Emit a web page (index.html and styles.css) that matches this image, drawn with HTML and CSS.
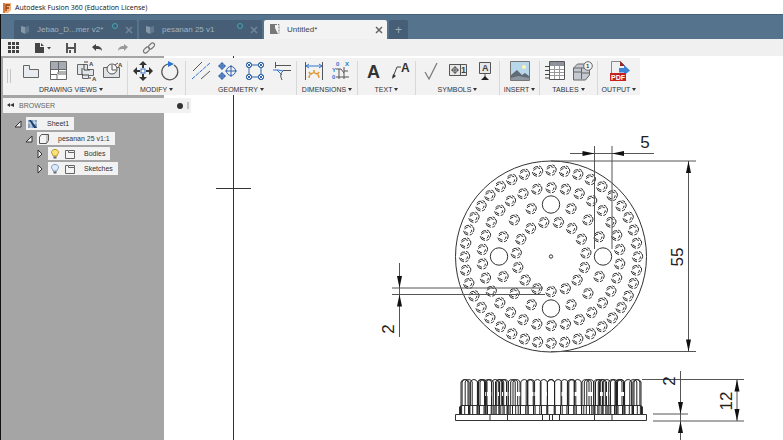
FILE: index.html
```html
<!DOCTYPE html>
<html lang="en">

<head>
    <meta charset="UTF-8">
    <meta name="viewport" content="width=device-width, initial-scale=1.0">
    <title>Autodesk Fusion 360 (Education License)</title>
    <link rel="stylesheet" href="styles.css">
</head>

<body>
    <header class="titlebar">
        <svg class="logo" width="10" height="11" viewBox="0 0 10 11">
            <path d="M1 1h8v7l-3 3H1z" fill="#f3b27a" />
            <path d="M1 1h2v10H1z" fill="#d9793a" />
            <path d="M4 9V3h4M4 6h3" fill="none" stroke="#8f3c10" stroke-width="1.3" />
        </svg>
        <h1 class="title">Autodesk Fusion 360 (Education License)</h1>
    </header>

    <div class="app">
        <nav class="tabs">
            <div class="tab">
                <svg width="12" height="12" viewBox="0 0 12 12">
                    <path d="M2 2l4 1v7L2 8z" fill="#8798a8" />
                    <path d="M6 3l4-1v6l-4 2z" fill="#62788c" />
                </svg>
                <a class="tab-name" href="#">Jebao_D...mer v2*</a>
                <i class="sync"></i>
                <button class="close" aria-label="Close Jebao">
                    <svg width="6" height="6" viewBox="0 0 6 6"><path d="M0 0l6 6M6 0L0 6" /></svg>
                </button>
            </div>
            <div class="tab">
                <svg width="12" height="12" viewBox="0 0 12 12">
                    <path d="M2 2l4 1v7L2 8z" fill="#8798a8" />
                    <path d="M6 3l4-1v6l-4 2z" fill="#62788c" />
                </svg>
                <a class="tab-name" href="#">pesanan 25 v1</a>
                <i class="sync"></i>
                <button class="close" aria-label="Close pesanan">
                    <svg width="6" height="6" viewBox="0 0 6 6"><path d="M0 0l6 6M6 0L0 6" /></svg>
                </button>
            </div>
            <div class="tab active">
                <svg width="12" height="12" viewBox="0 0 12 12">
                    <path d="M1 0h5v4l3 6H1z" fill="#777" />
                    <path d="M6 .5h4v9" fill="none" stroke="#777" stroke-dasharray="2 1" />
                </svg>
                <a class="tab-name" href="#">Untitled*</a>
                <button class="close" aria-label="Close Untitled">
                    <svg width="6" height="6" viewBox="0 0 6 6"><path d="M0 0l6 6M6 0L0 6" /></svg>
                </button>
            </div>
            <button class="tab-add" aria-label="New tab">+</button>
        </nav>

        <div class="quick">
            <button aria-label="Data panel">
                <svg width="12" height="12" viewBox="0 0 12 12">
                    <path d="M0 0h3v3H0zM4 0h3v3H4zM8 0h3v3H8zM0 4h3v3H0zM4 4h3v3H4zM8 4h3v3H8zM0 8h3v3H0zM4 8h3v3H4zM8 8h3v3H8z" fill="#444" />
                </svg>
            </button>
            <button aria-label="File">
                <svg width="17" height="12" viewBox="0 0 17 12">
                    <path d="M1 1h5v4h4v6H1zM7 1l3 3H7z" fill="#444" />
                    <path d="M13 5h4l-2 2.500z" fill="#444" />
                </svg>
            </button>
            <button aria-label="Save">
                <svg width="12" height="12" viewBox="0 0 12 12">
                    <path d="M1 1h10v10H1z" fill="#555" />
                    <path d="M3 1h6v4H3zM3 7h6v4H3z" fill="#f0f0f0" />
                    <path d="M4 8h2v3H4z" fill="#555" />
                </svg>
            </button>
            <button aria-label="Undo">
                <svg width="12" height="12" viewBox="0 0 12 12">
                    <path d="M1 5l4-3v2c4 0 6 2 6 5-1-2-3-2-6-2v2z" fill="#444" />
                </svg>
            </button>
            <button aria-label="Redo">
                <svg width="12" height="12" viewBox="0 0 12 12">
                    <path d="M11 5L7 2v2C3 4 1 6 1 9c1-2 3-2 6-2v2z" fill="#999" />
                </svg>
            </button>
            <button aria-label="Link">
                <svg width="12" height="12" viewBox="0 0 12 12" fill="none" stroke="#777" stroke-width="1.2">
                    <rect x="5" y="2" width="7" height="4" rx="2" transform="rotate(-45 8.500 4)" />
                    <rect x="0" y="6" width="7" height="4" rx="2" transform="rotate(-45 3.500 8)" />
                </svg>
            </button>
        </div>

        <main class="workspace">
            <svg class="canvas" viewBox="1 56 782 384" preserveAspectRatio="xMinYMin slice">
                <defs>
                    <g id="pin">
                        <path d="M-5.200 1A5.300 5.300 0 0 0-.5 5.300M1 5.200A5.300 5.300 0 0 0 4 3.500M4.200 2.500A5 5 0 0 0 5-2L3.500-3M1.500-5.200L4-3.800M.5-4.500A4.800 4.800 0 0 0-4.200-2.500M-1-2.500Q-4-2-4-.5M-3.500 1.500Q-3 3.500-.5 3.500M2.500-2.500L0-3.500M3 0Q3 2 1.500 3" />
                    </g>
                    <path id="arrow" d="M0 0L-2.500 12H2.500z" />
                </defs>
                <rect x="164" y="56" width="2000" height="2000" fill="#fff" />
                <path class="line" d="M233.500 56V2000M216 188.500H251" />

                <!-- top view -->
                <g class="line">
                    <circle cx="551" cy="256.500" r="95.500" />
                    <circle cx="551" cy="204.500" r="8.700" />
                    <circle cx="551" cy="308.500" r="8.700" />
                    <circle cx="499" cy="256.500" r="8.700" />
                    <circle cx="603" cy="256.500" r="8.700" />
                    <circle cx="551" cy="256.500" r="1.700" />
                </g>
                <g id="pins" class="pins"></g>

                <!-- side view -->
                <g class="line">
                    <path d="M455.500 414.500H646.500V420.500H455.500z" />
                    <path d="M490 414V421M507.500 414V421M542.500 414V421M549.500 414V421M552.500 414V421M559.500 414V421M594.500 414V421M612 414V421" />
                    <path d="M459.500 414V407L461 405.500H641L642.500 407V414" />
                </g>
                <g id="teeth" class="teeth"></g>

                <!-- dimensions -->
                <g class="dim">
                    <path d="M570 153.500H654M594.500 146V249M612 146V249" />
                    <path d="M551 161H696M551 351.500H696M688.500 161V351" />
                    <path d="M392 288H543M392 294.500H545M399.500 263V337" />
                    <path d="M642 379.500H744M653 414H688M653 421H744M680.500 371V440M737 380V421" />
                </g>
                <g class="arrows">
                    <use href="#arrow" transform="translate(594.500 153.500) rotate(90)" />
                    <use href="#arrow" transform="translate(612 153.500) rotate(-90)" />
                    <use href="#arrow" transform="translate(688.500 161)" />
                    <use href="#arrow" transform="translate(688.500 351.500) rotate(180)" />
                    <use href="#arrow" transform="translate(399.500 288) rotate(180)" />
                    <use href="#arrow" transform="translate(399.500 294.500)" />
                    <use href="#arrow" transform="translate(737 379.500)" />
                    <use href="#arrow" transform="translate(737 421) rotate(180)" />
                    <use href="#arrow" transform="translate(680.500 414) rotate(180)" />
                    <use href="#arrow" transform="translate(680.500 421)" />
                </g>
                <g class="dim-text">
                    <text x="645" y="148">5</text>
                    <text transform="translate(683 257) rotate(-90)">55</text>
                    <text transform="translate(394 329) rotate(-90)">2</text>
                    <text transform="translate(675 381) rotate(-90)">2</text>
                    <text transform="translate(732 401) rotate(-90)">12</text>
                </g>
            </svg>

            <div class="toolbar">
                <i class="grip"></i>
                <section class="group views">
                    <div class="icons">
                        <svg width="20" height="20" viewBox="0 0 20 20">
                            <path d="M2.500 4.500h6v4h9v8h-15z" fill="#e8ebef" stroke="#666" />
                        </svg>
                        <svg width="20" height="20" viewBox="0 0 20 20">
                            <path d="M2.500.500h16v18h-16z" fill="#fff" stroke="#666" />
                            <path d="M3 1h15v7H3z" fill="#a5abb3" />
                            <path d="M3 8.500h15M10.500 1v10H18M3 13.500h6v5M10 11v2h8" fill="none" stroke="#666" />
                        </svg>
                        <svg width="20" height="20" viewBox="0 0 20 20">
                            <path d="M2.500 3.500h10v5h6v6h-5v3h-6v-4h-5z" fill="#e4e7ea" stroke="#666" />
                            <path d="M7 7v7h7M9 3v6h6M9 1h4M14 17h2" fill="none" stroke="#444" />
                            <text class="glyph" x="14" y="5">A</text>
                            <text class="glyph" x="17" y="20">A</text>
                        </svg>
                        <svg width="20" height="20" viewBox="0 0 20 20">
                            <path d="M1.500 6.500h16v10h-16z" fill="#dfe3e7" stroke="#666" />
                            <circle cx="10" cy="8" r="5" fill="#f5f5f5" stroke="#555" />
                            <path d="M10 4v5h4M13 4l3-2" fill="none" stroke="#555" />
                            <text class="glyph" x="16" y="6">A</text>
                        </svg>
                    </div>
                    <button class="menu">DRAWING VIEWS</button>
                </section>
                <section class="group modify">
                    <div class="icons">
                        <svg width="20" height="20" viewBox="0 0 20 20">
                            <path d="M10 0l4 4h-3v3H9V4H6zM10 20l-4-4h3v-3h2v3h3zM0 10l4-4v3h3v2H4v3zM20 10l-4 4v-3h-3V9h3V6z" fill="#333" />
                            <rect x="8" y="8" width="4" height="4" fill="#fff" stroke="#2f74d0" />
                        </svg>
                        <svg width="20" height="20" viewBox="0 0 20 20">
                            <path d="M14 4A8 8 0 1 1 8 3" fill="none" stroke="#555" stroke-width="1.200" />
                            <path d="M8 0l6 3-6 3z" fill="#2f74d0" />
                        </svg>
                    </div>
                    <button class="menu">MODIFY</button>
                </section>
                <section class="group geometry">
                    <div class="icons">
                        <svg width="20" height="20" viewBox="0 0 20 20" fill="none">
                            <path d="M2 10L11 1M10 18l9-8" stroke="#555" />
                            <path d="M1 18L19 2" stroke="#2f74d0" stroke-dasharray="4 1" />
                        </svg>
                        <svg width="20" height="20" viewBox="0 0 20 20" fill="none" stroke="#3264aa">
                            <circle cx="4" cy="5" r="2.500" fill="#9ab8e2" />
                            <circle cx="4" cy="15" r="2.500" fill="#9ab8e2" />
                            <circle cx="13" cy="10" r="4.500" />
                            <path d="M4 1v8M0 5h8M4 11v8M0 15h8M13 4v12M7 10h12" />
                        </svg>
                        <svg width="20" height="20" viewBox="0 0 20 20" fill="none" stroke="#3264aa">
                            <path d="M4 6v8M16 6v8M6 4h8M6 16h8" />
                            <circle cx="4" cy="4" r="2.700" />
                            <circle cx="16" cy="4" r="2.700" />
                            <circle cx="4" cy="16" r="2.700" />
                            <circle cx="16" cy="16" r="2.700" />
                            <path d="M2 2l4 4M6 2L2 6M14 2l4 4M18 2l-4 4M2 14l4 4M6 14l-4 4M14 14l4 4M18 14l-4 4" />
                        </svg>
                        <svg width="20" height="20" viewBox="0 0 20 20" fill="none">
                            <path d="M3 4.500h16M11 9.500h8M3.500 1v6M11 10q-4 3-1 9" stroke="#555" />
                            <path d="M1 9h5l5 1M5 9l5 5" stroke="#2f74d0" />
                        </svg>
                    </div>
                    <button class="menu">GEOMETRY</button>
                </section>
                <section class="group dimensions">
                    <div class="icons">
                        <svg width="20" height="20" viewBox="0 0 20 20" fill="none">
                            <path d="M1.500 1v18M18.500 1v18" stroke="#555" />
                            <path d="M2 5h16M5 3L2 5l3 2M15 3l3 2-3 2" stroke="#2f74d0" />
                            <path d="M5 17a5 5 0 0 1 10 0M10 9v4M5 11l2 3M15 11l-2 3" stroke="#e0952e" stroke-width="1.500" stroke-dasharray="3 1" />
                        </svg>
                        <svg width="20" height="20" viewBox="0 0 20 20" fill="none">
                            <path d="M5 8h5l3 4M8 8v10M13 6v12M5 16h13M13 10h4" stroke="#555" />
                            <text class="glyph blue" x="5" y="5">0</text>
                            <text class="glyph blue" x="14" y="5">X</text>
                            <text class="glyph blue" x="1" y="11">Y</text>
                            <text class="glyph blue" x="1" y="18">0</text>
                        </svg>
                    </div>
                    <button class="menu">DIMENSIONS</button>
                </section>
                <section class="group text">
                    <div class="icons">
                        <svg width="20" height="20" viewBox="0 0 20 20">
                            <text class="letter" x="4" y="17">A</text>
                        </svg>
                        <svg width="20" height="20" viewBox="0 0 20 20">
                            <path d="M3 16L7 6h4" fill="none" stroke="#444" />
                            <path d="M2 18l1-5 3 2z" fill="#333" />
                            <text class="letter small" x="11" y="11">A</text>
                        </svg>
                    </div>
                    <button class="menu">TEXT</button>
                </section>
                <section class="group symbols">
                    <div class="icons">
                        <svg width="20" height="20" viewBox="0 0 20 20">
                            <path d="M4 11l4 7 8-16" fill="none" stroke="#777" stroke-width="1.200" />
                        </svg>
                        <svg width="20" height="20" viewBox="0 0 20 20">
                            <path d="M1.500 3.500h17v11h-17zM12.500 3v12" fill="#e8e8e8" stroke="#555" />
                            <circle cx="7" cy="9" r="2.500" fill="none" stroke="#555" />
                            <path d="M7 5v8M3 9h8" stroke="#555" />
                            <text class="glyph big" x="13" y="12">1</text>
                        </svg>
                        <svg width="20" height="20" viewBox="0 0 20 20">
                            <path d="M4.500 1.500h11v11h-11zM10 13v4" fill="#e8e8e8" stroke="#555" />
                            <path d="M10 15l4 4H6z" fill="#222" />
                            <text class="glyph mark" x="7" y="10">A</text>
                        </svg>
                    </div>
                    <button class="menu">SYMBOLS</button>
                </section>
                <section class="group insert">
                    <div class="icons">
                        <svg width="20" height="20" viewBox="0 0 20 20">
                            <path d="M.5.500h19v19H.5z" fill="#b8d7ea" stroke="#777" />
                            <circle cx="14" cy="6" r="2" fill="#fff7b5" />
                            <path d="M1 14l6-5 5 5 3-2 4 3v4H1z" fill="#606b76" />
                            <path d="M1 17l7-2 11 2v2H1z" fill="#8c97a1" />
                        </svg>
                    </div>
                    <button class="menu">INSERT</button>
                </section>
                <section class="group tables">
                    <div class="icons">
                        <svg width="20" height="20" viewBox="0 0 20 20">
                            <path d="M4.500.500h15v18h-15z" fill="#fff" stroke="#555" />
                            <path d="M5 1h14v4H5z" fill="#8b929b" />
                            <path d="M5 8.500h14M5 11.500h14M5 14.500h14M9.500 1v17M14.500 5v13" stroke="#999" />
                            <path d="M0 5.500h5M0 9.500h5M0 13.500h5M0 17h5" stroke="#444" />
                        </svg>
                        <svg width="20" height="20" viewBox="0 0 20 20">
                            <path d="M1.500 7l4-4h12v11l-4 5h-12z" fill="#c4c9d1" stroke="#666" />
                            <path d="M2 7h11M9.500 7v11M2 11h7M14 7l3-3M10 12h7" stroke="#666" fill="none" />
                            <circle cx="16" cy="5" r="4.300" fill="#f4f4f4" stroke="#666" />
                            <text class="glyph" x="14" y="7">1</text>
                        </svg>
                    </div>
                    <button class="menu">TABLES</button>
                </section>
                <section class="group output">
                    <div class="icons">
                        <svg width="20" height="20" viewBox="0 0 20 20">
                            <path d="M2.500.500h9l4 4v14h-13z" fill="#eef0f2" stroke="#888" />
                            <path d="M11 0l5 5h-5z" fill="#9a2a25" />
                            <path d="M10 7h5V4l6 5.500-6 5v-3h-5z" fill="#3d84d6" />
                            <rect x="1" y="12" width="16" height="8" fill="#c8201d" />
                            <text class="glyph white" x="2" y="19">PDF</text>
                        </svg>
                    </div>
                    <button class="menu">OUTPUT</button>
                </section>
            </div>

            <aside class="browser">
                <div class="browser-head">
                    <button class="collapse" aria-label="Collapse">
                        <svg width="7" height="6" viewBox="0 0 7 6"><path d="M3 1v4L0 3zM7 1v4L3 3z" fill="#333" /></svg>
                    </button>
                    <h2>BROWSER</h2>
                    <button class="dot" aria-label="Options"></button>
                    <i class="grip small"></i>
                </div>
                <ul class="tree">
                    <li class="level1">
                        <svg class="twist" width="8" height="8" viewBox="0 0 8 8"><path d="M7 1v6H1z" /></svg>
                        <a class="node" href="#">
                            <svg width="10" height="10" viewBox="0 0 10 10">
                                <path d="M0 1h9v8H0z" fill="#8aa3bd" />
                                <path d="M3 1v8M6 1v8M0 4h9" stroke="#dce6ef" />
                                <path d="M1 1h2l6 8H6z" fill="#1d3e73" />
                            </svg>
                            <span>Sheet1</span>
                        </a>
                    </li>
                    <li class="level2">
                        <svg class="twist" width="8" height="8" viewBox="0 0 8 8"><path d="M7 1v6H1z" /></svg>
                        <a class="node" href="#">
                            <svg width="10" height="10" viewBox="0 0 10 10">
                                <path d="M.5 3l2-2.500h7v6l-2 3h-7z" fill="#f4f4f4" stroke="#555" />
                                <path d="M8 1v6l-1 2" fill="none" stroke="#999" />
                            </svg>
                            <span>pesanan 25 v1:1</span>
                        </a>
                    </li>
                    <li class="level3">
                        <svg class="twist" width="8" height="8" viewBox="0 0 8 8"><path d="M2 0v8l4-4z" /></svg>
                        <a class="node" href="#">
                            <svg width="10" height="10" viewBox="0 0 10 10">
                                <path d="M3 6C0 3 2 .5 5 .5S10 3 7 6v1H3z" fill="#fbe27a" stroke="#b99527" />
                                <path d="M3.500 7.500h3v2h-3z" fill="#666" />
                            </svg>
                            <svg width="10" height="10" viewBox="0 0 10 10"><path d="M.5 1.500h3v2h6v6h-9zM4 1.500h5.500v2" fill="#f4f4f4" stroke="#666" /></svg>
                            <span>Bodies</span>
                        </a>
                    </li>
                    <li class="level3">
                        <svg class="twist" width="8" height="8" viewBox="0 0 8 8"><path d="M2 0v8l4-4z" /></svg>
                        <a class="node" href="#">
                            <svg width="10" height="10" viewBox="0 0 10 10">
                                <path d="M3 6C0 3 2 .5 5 .5S10 3 7 6v1H3z" fill="#dfeafa" stroke="#7f9cc4" />
                                <path d="M3.500 7.500h3v2h-3z" fill="#666" />
                            </svg>
                            <svg width="10" height="10" viewBox="0 0 10 10"><path d="M.5 1.500h3v2h6v6h-9zM4 1.500h5.500v2" fill="#f4f4f4" stroke="#666" /></svg>
                            <span>Sketches</span>
                        </a>
                    </li>
                </ul>
            </aside>
        </main>
    </div>
    <script src="drawing.js"></script>
</body>

</html>
```
FILE: styles.css
```css
* {
    box-sizing: border-box;
    margin: 0;
    padding: 0;
}

body {
    display: flex;
    flex-direction: column;
    height: 100vh;
    overflow: hidden;
    background: #fff;
    font-family: "Liberation Sans", Arial, sans-serif;
    font-size: 7px;
    color: #333;
}

button {
    border: none;
    background: none;
    font: inherit;
    color: inherit;
}

a {
    color: inherit;
    text-decoration: none;
}

svg {
    flex: none;
    overflow: visible;
}

.titlebar {
    display: flex;
    align-items: center;
    gap: 3px;
    height: 14px;
    padding-left: 2px;
}

.title {
    font: 7px "Open Sans", sans-serif;
    color: #111;
}

.app {
    flex: 1;
    display: flex;
    flex-direction: column;
    min-height: 0;
    border-left: 1px solid #111;
}

/* document tabs */

.tabs {
    display: flex;
    align-items: flex-end;
    gap: 2px;
    height: 25px;
    padding-left: 13px;
    background: #56738e;
    border-top: 1px solid #48637c;
}

.tab {
    display: flex;
    align-items: center;
    width: 123px;
    height: 19px;
    padding: 0 5px;
    border-radius: 2px 2px 0 0;
    background: #465e76;
    color: #a3b1be;
}

.tab-name {
    flex: 1;
    padding-left: 6px;
    font-size: 8px;
    white-space: nowrap;
}

.tab .sync {
    width: 6px;
    height: 6px;
    margin: 0 8px 8px 0;
    border: 1px solid #3fa9b5;
    border-radius: 50%;
}

.tab .close {
    display: flex;
    fill: none;
    stroke: #74869a;
    stroke-width: 1.5;
}

.tab.active {
    background: #f3f3f3;
    color: #444;
}

.tab.active .close {
    stroke: #666;
}

.tab-add {
    width: 19px;
    height: 19px;
    border-radius: 2px 2px 0 0;
    background: #465e76;
    color: #a3b1be;
    font-size: 12px;
}

/* quick access */

.quick {
    display: flex;
    align-items: center;
    gap: 14px;
    height: 17px;
    padding-left: 7px;
    background: #f0f0f0;
}

.quick button {
    display: flex;
}

.workspace {
    position: relative;
    flex: 1;
    min-height: 0;
    background: #a5a5a5;
}

.canvas {
    position: absolute;
    inset: 0;
    width: 100%;
    height: 100%;
    overflow: hidden;
}

.line,
.dim {
    fill: none;
    stroke: #333;
    stroke-width: 1;
}

.dim {
    stroke: #555;
}

.pins {
    fill: none;
    stroke: #333;
    stroke-width: 1;
}

.teeth {
    fill: none;
    stroke: #222;
}

.arrows {
    fill: #111;
}

.dim-text {
    font-size: 17px;
    text-anchor: middle;
    fill: #222;
}

/* ribbon */

.toolbar {
    position: relative;
    display: flex;
    width: max-content;
    height: 37px;
    margin: 2px 0 0 2px;
    padding: 3px 0 0 4px;
    background: #f2f2f2;
}

.grip {
    width: 4px;
    height: 14px;
    margin-top: 8px;
    border: 1px solid #c4c4c4;
    border-width: 0 1px;
}

.group {
    display: flex;
    flex-direction: column;
    align-items: center;
    justify-content: space-between;
    border-right: 1px solid #d8d8d8;
}

.group:last-child {
    border-right: none;
}

.icons {
    display: flex;
    gap: 7px;
}

.menu {
    height: 10px;
    line-height: 10px;
    white-space: nowrap;
}

.menu::after {
    content: "";
    display: inline-block;
    margin: 0 0 1px 2px;
    border: 2px solid transparent;
    border-top: 3px solid #333;
    border-bottom: none;
}

.views {
    width: 117px;
    padding-left: 4px;
}

.modify {
    width: 58px;
}

.geometry {
    width: 111px;
}

.dimensions {
    width: 61px;
}

.text {
    width: 58px;
}

.symbols {
    width: 84px;
}

.insert {
    width: 40px;
}

.output {
    width: 42px;
}

.tables {
    width: 58px;
}

.glyph {
    font-size: 6px;
    font-weight: bold;
    fill: #444;
}

.glyph.blue {
    fill: #2f74d0;
}

.glyph.white {
    font-size: 7px;
    fill: #fff;
}

.glyph.big,
.glyph.mark {
    font-size: 9px;
}

.letter {
    font-size: 18px;
    font-weight: bold;
    fill: #333;
}

.letter.small {
    font-size: 12px;
}

/* browser panel */

.browser {
    position: relative;
    width: 188px;
    margin: 3px 0 0 2px;
}

.browser-head {
    display: flex;
    align-items: center;
    height: 15px;
    padding: 0 2px 0 4px;
    background: #f2f2f2;
}

.browser-head h2 {
    flex: 1;
    padding-left: 5px;
    font-size: 7px;
    font-weight: normal;
    color: #666;
}

.browser-head .dot {
    width: 6px;
    height: 6px;
    margin-right: 4px;
    border-radius: 50%;
    background: #333;
}

.grip.small {
    width: 2px;
    height: 7px;
    margin: 0;
}

.tree {
    display: flex;
    flex-direction: column;
    gap: 2px;
    padding-top: 4px;
    list-style: none;
}

.tree li {
    display: flex;
    align-items: center;
    gap: 4px;
}

.level1 {
    padding-left: 11px;
}

.level2 {
    padding-left: 22px;
}

.level3 {
    padding-left: 33px;
}

.twist {
    fill: #eee;
    stroke: #333;
}

.node {
    display: flex;
    align-items: center;
    gap: 5px;
    height: 13px;
    padding: 0 5px 0 2px;
    background: #f2f2f2;
}

.node span {
    padding-left: 4px;
}
```
FILE: drawing.js
```js
// pin rings of the top view: radius, number of places, first angle
var rings = [
    [86.5, 40, 0],
    [69, 30, 0],
    [52, 16, 0],
    [35, 15, 12]
];
var pins = '';
rings.forEach(function(ring) {
    for (var i = 0; i < ring[1]; i++) {
        // the four screw holes take every fourth place
        if (ring[1] == 16 && i % 4 == 0) {
            continue;
        }
        var deg = ring[2] + i * 360 / ring[1];
        var a = deg * Math.PI / 180;
        var x = 551 + ring[0] * Math.sin(a);
        var y = 256.5 - ring[0] * Math.cos(a);
        pins += '<use href="#pin" x="' + x.toFixed(1) + '" y="' + y.toFixed(1) + '"/>';
    }
});
document.getElementById('pins').innerHTML = pins;

// side view: every pin of the outer rings seen from the front
var teeth = '';
[[86.5, 40], [69, 30], [52, 16]].forEach(function(ring) {
    for (var i = 0; i <= ring[1] / 2; i++) {
        var x = 551 - ring[0] * Math.cos(i * 2 * Math.PI / ring[1]);
        var l = (x - 3.5).toFixed(1);
        var r = (x + 3.5).toFixed(1);
        // hidden pins are broken at half height
        var side = ring[1] == 40 ? 'V406' : 'V392M' + r + ' 396V406';
        teeth += '<path d="M' + l + ' 406V382q1-2.500 3.500-2.500t3.500 2.500' + side + '"/>';
        teeth += '<path d="M' + (x - 4).toFixed(1) + ' 414V406M' + (x + 4).toFixed(1) + ' 414V406"/>';
    }
});
document.getElementById('teeth').innerHTML = teeth;
```
